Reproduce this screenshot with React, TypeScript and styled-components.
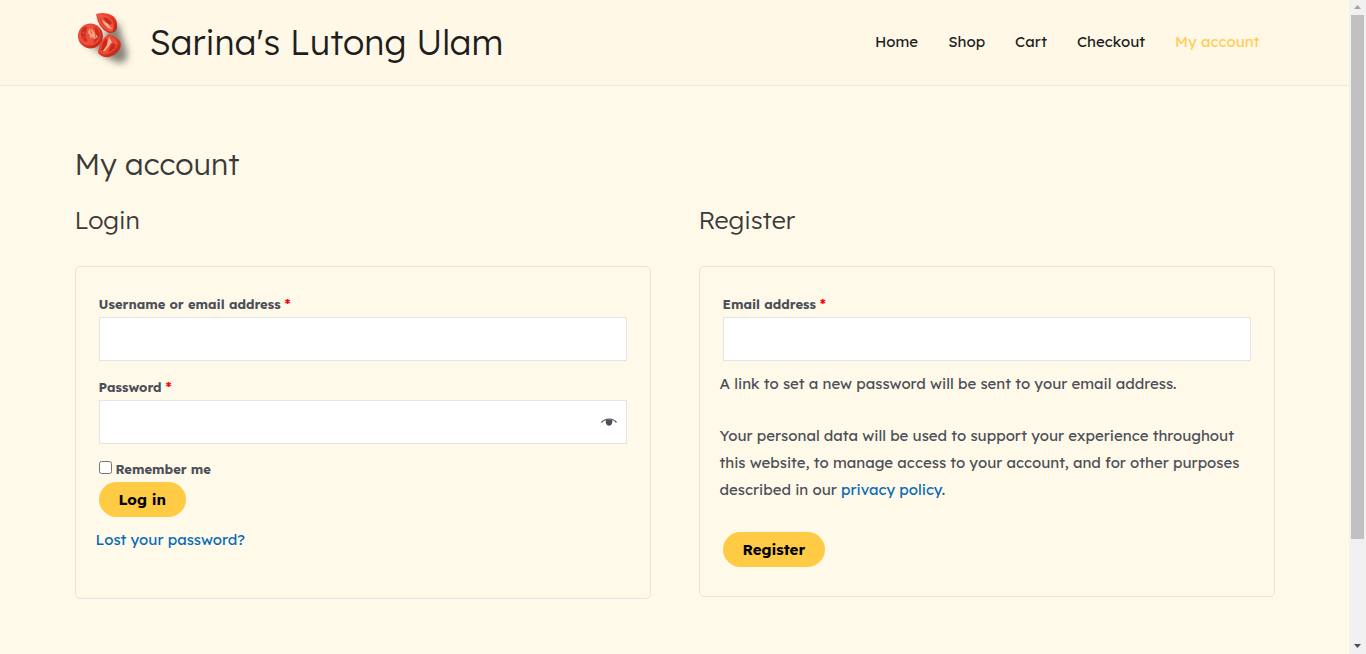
import React, { useState } from "react";
import styled, { createGlobalStyle } from "styled-components";

const GlobalStyle = createGlobalStyle`
  * { box-sizing: border-box; }
  body {
    margin: 0;
    background: #fff9e9;
    color: #4b4f58;
    font-family: "Lexend Deca", Lexend, Inter, "Open Sans", sans-serif;
    font-size: 15px;
    font-weight: 400;
    line-height: 27px;
  }
`;

const Shell = styled.div`
  display: grid;
  grid-template-columns: minmax(0, 1fr) 17px;
  min-height: 100vh;
`;

const Container = styled.div`
  width: 100%;
  max-width: 1240px;
  margin: 0 auto;
  padding: 0 20px;
`;

const Header = styled.header`
  background: #fff8e7;
  border-bottom: 1px solid #eaeaea;
`;

const HeaderRow = styled(Container)`
  display: flex;
  align-items: center;
  justify-content: space-between;
  min-height: 85px;
  padding-bottom: 2px;
`;

const Brand = styled.a`
  display: flex;
  align-items: center;
  gap: 15px;
  color: #1e1e1e;
  font-size: 35px;
  font-weight: 300;
  line-height: 44px;
  text-decoration: none;
`;

const Logo = styled.svg`
  width: 60px;
  height: 60px;
  margin-bottom: 6px;
`;

const Nav = styled.nav`
  display: flex;
  gap: 30px;
  padding-right: 15px;
`;

const NavLink = styled.a<{ $active?: boolean }>`
  color: ${(p) => (p.$active ? "#ffcd57" : "#1e1e1e")};
  text-decoration: none;
`;

const PageTitle = styled.h1`
  margin: 0 0 20px;
  padding-top: 57px;
  color: #3a3a3a;
  font-size: 30px;
  font-weight: 300;
  line-height: 42px;
`;

const Columns = styled.div`
  display: grid;
  grid-template-columns: 1fr 1fr;
  gap: 48px;
  align-items: start;
  padding-bottom: 48px;
`;

const SectionTitle = styled.h2`
  margin: 0 0 31px;
  color: #3a3a3a;
  font-size: 25px;
  font-weight: 300;
  line-height: 30px;
`;

const Card = styled.form<{ $bottom: number }>`
  padding: 24px 20px ${(p) => p.$bottom}px;
  border: 1px solid #e2e4e7;
  border-radius: 5px;
`;

const Row = styled.div`
  padding: 0 3px;
`;

const Field = styled(Row)<{ $gap?: number }>`
  margin-bottom: ${(p) => p.$gap ?? 13}px;
`;

const Label = styled.label`
  display: block;
  font-size: 13px;
  font-weight: 700;
  line-height: 26px;
`;

const Required = styled.span`
  color: #ff0000;
`;

const InputWrap = styled.div`
  position: relative;
`;

const TextInput = styled.input`
  display: block;
  width: 100%;
  height: 44px;
  padding: 12px;
  border: 1px solid #e2e4e7;
  border-radius: 0;
  background: #fff;
  color: #4b4f58;
  font: inherit;
`;

const EyeButton = styled.button`
  position: absolute;
  top: 0;
  right: 10px;
  height: 100%;
  padding: 0;
  border: 0;
  background: none;
  color: #4b4f58;
  cursor: pointer;

  svg { display: block; }
`;

const CheckLabel = styled(Label)`
  display: flex;
  align-items: center;
  gap: 4px;
  line-height: 25px;
`;

const Checkbox = styled.input`
  width: 13px;
  height: 13px;
  margin: 0 0 4px;
`;

const Submit = styled.button`
  display: block;
  height: 35px;
  padding: 0 20px;
  border: 0;
  border-radius: 18px;
  background: #ffcb45;
  color: #000;
  font: inherit;
  font-weight: 700;
  line-height: 35px;
  cursor: pointer;
`;

const Text = styled.p<{ $gap?: number }>`
  margin: 0 0 ${(p) => p.$gap ?? 25}px;
`;

const FootText = styled.p`
  margin: 9px 0 0;
`;

const Link = styled.a`
  color: #046bb8;
  text-decoration: none;
`;

const ScrollBar = styled.div`
  position: sticky;
  top: 0;
  display: flex;
  flex-direction: column;
  height: 100vh;
  background: #f1f1f1;
`;

const ScrollArrow = styled.svg`
  display: block;
  width: 17px;
  height: 15px;
`;

const ScrollTrack = styled.div`
  flex: 1;
  padding: 0 2px;
`;

const ScrollThumb = styled.div`
  height: 84%;
  background: #c1c1c1;
`;

function TomatoLogo() {
  return (
    <Logo viewBox="0 0 60 60" aria-hidden="true">
      <defs>
        <filter id="soft" x="-40%" y="-40%" width="180%" height="180%">
          <feGaussianBlur stdDeviation="3.5" />
        </filter>
        <linearGradient id="skin" x1="0" y1="0" x2="1" y2="1">
          <stop offset="0" stopColor="#ef5a42" />
          <stop offset="0.5" stopColor="#e23a26" />
          <stop offset="1" stopColor="#b91d14" />
        </linearGradient>
      </defs>
      <g fill="#45453f" filter="url(#soft)">
        <path opacity="0.65" d="M34 10 Q46 14 46 24 L51 40 Q55 52 46 54 Q37 53 28 45 L12 36 Q20 38 30 29Z" />
      </g>
      <path fill="url(#skin)" d="M21 5 Q31 2 38 7 Q43 11 42 19 Q41 24 34 24 Q23 20 21 5Z" />
      <path fill="#f0553e" d="M22 6 Q31 5 37 11 Q40 17 38 22 Q35 24 31 21 Q24 15 22 6Z" />
      <path fill="#c9281c" d="M28 8 Q35 9 37 14 L35 16 Q30 13 28 8Z" />
      <path fill="#f9b28d" d="M27 11 L33 15 L37 20 L33 19 L29 15Z" />
      <path stroke="#d83827" strokeWidth="1" fill="none" d="M25 9 Q26 15 33 21 M32 9 L36 13" />
      <ellipse cx="15.500" cy="27" rx="12.500" ry="12.500" fill="url(#skin)" />
      <ellipse cx="14.500" cy="26" rx="11" ry="10.500" fill="#ea503a" />
      <path fill="#cc2f20" d="M6 22 Q8 17 12 18 Q10 25 12 33 Q5 31 6 22Z M19 17 Q25 20 25 27 Q22 33 18 34 L21 27Z" />
      <path fill="#f9a482" d="M14 20 Q17 19 19 23 L23 28 L20 30 L17 28 L15 30 Q16 26 13 24 Z" />
      <path stroke="#e75036" strokeWidth="1" fill="none" d="M7 23 L11 25 M8 29 L12 27 M15 20 L17 25 M20 24 L21 29" />
      <path fill="url(#skin)" d="M34 25 Q44 28 46 35 Q45 45 34 48 Q27 49 23 44 Q24 31 34 25Z" />
      <path fill="#ea4f39" d="M34 26 Q41 29 43 34 Q41 42 32 45 Q27 46 25 43 Q26 32 34 26Z" />
      <path fill="#c9281c" d="M31 29 Q34 34 29 41 L26 42 Q27 33 31 29Z M37 34 L41 36 Q38 42 33 43Z" />
      <path fill="#f9b48e" d="M34 28 L37 33 L34 37 L30 42 L28 42 L32 36Z" />
    </Logo>
  );
}

function EyeIcon() {
  return (
    <svg width="16" height="10" viewBox="0 0 16 10" aria-hidden="true">
      <path d="M0.500 5.500 Q3.500 2 8 2 Q12.500 2 15.500 5.500" fill="none" stroke="currentColor" strokeWidth="1.200" />
      <path d="M4.800 2.500 H11.200 Q12 8.500 8 8.700 Q4 8.500 4.800 2.500Z" fill="currentColor" />
    </svg>
  );
}

const links = ["Home", "Shop", "Cart", "Checkout", "My account"];

export default function App() {
  const [visible, setVisible] = useState(false);
  const stop = (e: React.FormEvent) => e.preventDefault();

  return (
    <>
      <GlobalStyle />
      <Shell>
        <div>
          <Header>
            <HeaderRow>
              <Brand href="#">
                <TomatoLogo />
                <span>Sarina's Lutong Ulam</span>
              </Brand>
              <Nav>
                {links.map((name) => (
                  <NavLink key={name} href="#" $active={name === "My account"}>
                    {name}
                  </NavLink>
                ))}
              </Nav>
            </HeaderRow>
          </Header>

          <Container as="main">
            <PageTitle>My account</PageTitle>
            <Columns>
              <section>
                <SectionTitle>Login</SectionTitle>
                <Card $bottom={45} onSubmit={stop}>
                  <Field>
                    <Label htmlFor="username">
                      Username or email address <Required>*</Required>
                    </Label>
                    <TextInput id="username" type="text" />
                  </Field>
                  <Field>
                    <Label htmlFor="password">
                      Password <Required>*</Required>
                    </Label>
                    <InputWrap>
                      <TextInput id="password" type={visible ? "text" : "password"} />
                      <EyeButton type="button" aria-label="Show password" onClick={() => setVisible(!visible)}>
                        <EyeIcon />
                      </EyeButton>
                    </InputWrap>
                  </Field>
                  <Row>
                    <CheckLabel htmlFor="remember">
                      <Checkbox id="remember" type="checkbox" />
                      Remember me
                    </CheckLabel>
                    <Submit type="submit">Log in</Submit>
                  </Row>
                  <FootText>
                    <Link href="#">Lost your password?</Link>
                  </FootText>
                </Card>
              </section>

              <section>
                <SectionTitle>Register</SectionTitle>
                <Card $bottom={29} onSubmit={stop}>
                  <Field $gap={9}>
                    <Label htmlFor="email">
                      Email address <Required>*</Required>
                    </Label>
                    <TextInput id="email" type="email" />
                  </Field>
                  <Text>A link to set a new password will be sent to your email address.</Text>
                  <Text $gap={29}>
                    Your personal data will be used to support your experience throughout this website, to manage
                    access to your account, and for other purposes described in our{" "}
                    <Link href="#">privacy policy</Link>.
                  </Text>
                  <Row>
                    <Submit type="submit">Register</Submit>
                  </Row>
                </Card>
              </section>
            </Columns>
          </Container>
        </div>

        <ScrollBar aria-hidden="true">
          <ScrollArrow viewBox="0 0 17 15">
            <path d="M5 9 L8.500 5 L12 9Z" fill="#a3a3a3" />
          </ScrollArrow>
          <ScrollTrack>
            <ScrollThumb />
          </ScrollTrack>
          <ScrollArrow viewBox="0 0 17 15">
            <path d="M5 5 L12 5 L8.500 9Z" fill="#505050" />
          </ScrollArrow>
        </ScrollBar>
      </Shell>
    </>
  );
}
